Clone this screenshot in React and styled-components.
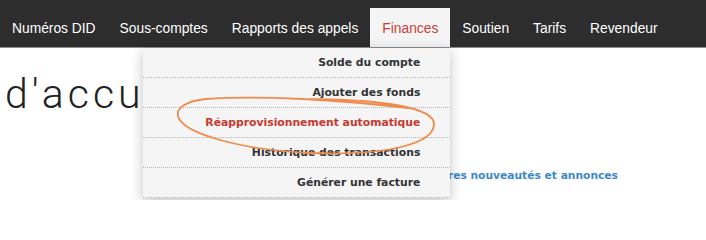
import React from "react";
import styled, { createGlobalStyle } from "styled-components";

const financeLinks = [
  "Solde du compte",
  "Ajouter des fonds",
  "Réapprovisionnement automatique",
  "Historique des transactions",
  "Générer une facture",
];

const menu = [
  "Numéros DID",
  "Sous-comptes",
  "Rapports des appels",
  "Finances",
  "Soutien",
  "Tarifs",
  "Revendeur",
];

const App = () => {
  return (
    <Page>
      <GlobalStyle />
      <NavBar>
        {menu.map((label) => (
          <NavItem key={label} active={label === "Finances"}>
            {label}
            {label === "Finances" && (
              <Pulldown>
                {financeLinks.map((link) => (
                  <PulldownItem
                    key={link}
                    current={link === "Réapprovisionnement automatique"}
                  >
                    {link}
                  </PulldownItem>
                ))}
              </Pulldown>
            )}
          </NavItem>
        ))}
      </NavBar>

      <Content>
        <Heading>d'accueil</Heading>
        <NewsLink href="#">Dernières nouveautés et annonces</NewsLink>
      </Content>

      {/* hand drawn circle around the auto-refill entry */}
      <Annotation viewBox="0 0 706 200" width="706" height="200">
        <path
          d="M 408 108 C 340 100, 260 95, 206 99 C 186 101, 176 108, 178 116 C 182 133, 240 150, 310 153 C 390 156, 434 143, 434 124 C 434 108, 385 99, 300 99"
          fill="none"
          stroke="#f08b4c"
          strokeWidth="1.8"
          strokeLinecap="round"
        />
      </Annotation>
    </Page>
  );
};

const GlobalStyle = createGlobalStyle`
  body {
    margin: 0;
    background: #ffffff;
    font-family: "Liberation Sans", Arial, sans-serif;
  }
`;

const Page = styled.div`
  position: relative;
  width: 706px;
  height: 200px;
  overflow: hidden;
  background: #ffffff;
`;

const NavBar = styled.nav`
  position: relative;
  z-index: 10;
  display: flex;
  height: 47px;
  background: #2d2d2d;
  border-bottom: 1px solid #8e8e8e;
`;

const NavItem = styled.div`
  position: relative;
  box-sizing: border-box;
  height: 39px;
  margin-top: 8px;
  padding: 3px 12px 0;
  line-height: 36px;
  font-size: 13.8px;
  white-space: nowrap;
  cursor: pointer;
  color: ${(p) => (p.active ? "#cc3d35" : "#ffffff")};
  background: ${(p) => (p.active ? "#f4f4f4" : "transparent")};
`;

const Pulldown = styled.div`
  position: absolute;
  top: 40px;
  right: 0;
  width: 307px;
  background: #f5f5f5;
  box-shadow: 0 3px 12px rgba(0, 0, 0, 0.24);
`;

const PulldownItem = styled.div`
  box-sizing: border-box;
  height: 30px;
  padding-right: 30px;
  border-bottom: 1px dotted #b3b3b3;
  text-align: right;
  line-height: 29px;
  font-family: "DejaVu Sans", Verdana, sans-serif;
  font-weight: bold;
  font-size: 10.8px;
  color: ${(p) => (p.current ? "#c8392f" : "#333333")};
`;

const Content = styled.main`
  padding-left: 5px;
`;

const Heading = styled.h1`
  margin: 26px 0 0;
  font-family: Roboto, "Liberation Sans", sans-serif;
  font-weight: 300;
  font-size: 41px;
  line-height: 1;
  letter-spacing: 4px;
  color: #222222;
  white-space: nowrap;
`;

const NewsLink = styled.a`
  display: block;
  margin: 53px 0 0 403px;
  line-height: 16px;
  font-family: "DejaVu Sans", Verdana, sans-serif;
  font-weight: bold;
  font-size: 10.7px;
  color: #3b89c9;
  text-decoration: none;
  white-space: nowrap;
`;

const Annotation = styled.svg`
  position: absolute;
  top: 0;
  left: 0;
  z-index: 20;
  pointer-events: none;
`;

export default App;
